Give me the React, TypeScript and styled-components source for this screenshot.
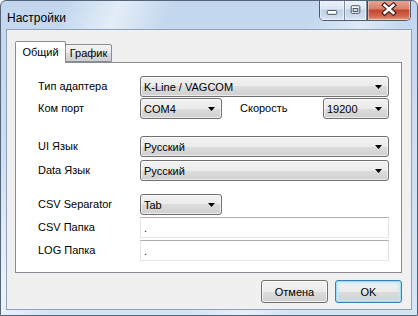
import styled, { createGlobalStyle } from 'styled-components';

const GlobalStyle = createGlobalStyle`
  html, body {
    margin: 0;
    padding: 0;
  }
  body {
    width: 418px;
    height: 316px;
    overflow: hidden;
    background: #fff;
    font-family: "Liberation Sans", Arial, sans-serif;
  }
`;

const Window = styled.div`
  width: 418px;
  height: 316px;
  box-sizing: border-box;
  border: 1px solid #56657a;
  border-radius: 6px 6px 0 0;
  overflow: hidden;
  display: flex;
  flex-direction: column;
  background:
    linear-gradient(112deg, rgba(255, 255, 255, 0) 12%, rgba(255, 255, 255, 0.55) 22%, rgba(255, 255, 255, 0) 32%),
    linear-gradient(112deg, rgba(255, 255, 255, 0) 58%, rgba(255, 255, 255, 0.45) 68%, rgba(255, 255, 255, 0) 76%),
    linear-gradient(to bottom, #c2d7ee 0%, #cddff2 50%, #d5e5f5 100%);
`;

const TitleBar = styled.div`
  height: 28px;
  display: flex;
  align-items: flex-start;
  flex-shrink: 0;
`;

const Title = styled.div`
  flex: 1;
  padding: 10px 0 0 6px;
  font-size: 12px;
  color: #000;
`;

const CaptionGroup = styled.div`
  display: flex;
  margin: -1px 6px 0 0;
  height: 20px;
  border: 1px solid #4a5b70;
  border-top: none;
  border-radius: 0 0 5px 5px;
  overflow: hidden;
`;

const CaptionButton = styled.div<{ $w: number; $close?: boolean }>`
  width: ${(p) => p.$w}px;
  height: 20px;
  display: flex;
  align-items: center;
  justify-content: center;
  box-sizing: border-box;
  border-left: ${(p) => (p.$close ? '1px solid #6b3a34' : 'none')};
  border-right: ${(p) => (p.$close ? 'none' : '1px solid #7d8da1')};
  box-shadow: inset 0 0 0 1px rgba(255, 255, 255, 0.45);
  background: ${(p) =>
    p.$close
      ? 'linear-gradient(to bottom, #e9a898 0%, #d9806c 45%, #c4452e 50%, #d2664c 80%, #e09b80 100%)'
      : 'linear-gradient(to bottom, #eef3f9 0%, #dbe5f1 45%, #c3d3e7 50%, #cddbec 80%, #dce7f3 100%)'};
`;

const Client = styled.div`
  margin: 0 5px 0 5px;
  height: 281px;
  box-sizing: border-box;
  border: 1px solid #8fa2b8;
  background: #f0f0f0;
  padding: 11px 9px 0 8px;
  display: flex;
  flex-direction: column;
`;

const TabStrip = styled.div`
  display: flex;
  align-items: flex-end;
  height: 21px;
  position: relative;
  z-index: 1;
`;

const Tab = styled.div<{ $active?: boolean; $w: number }>`
  width: ${(p) => p.$w}px;
  height: ${(p) => (p.$active ? 22 : 18)}px;
  margin-bottom: ${(p) => (p.$active ? -1 : 0)}px;
  margin-left: ${(p) => (p.$active ? 0 : -1)}px;
  box-sizing: border-box;
  border: 1px solid #898c95;
  border-bottom: ${(p) => (p.$active ? 'none' : '1px solid #898c95')};
  border-radius: 2px 2px 0 0;
  background: ${(p) => (p.$active ? '#fff' : 'linear-gradient(to bottom, #f2f2f2 0%, #ebebeb 50%, #dddddd 50%, #cfcfcf 100%)')};
  display: flex;
  align-items: center;
  justify-content: center;
  padding-bottom: ${(p) => (p.$active ? 1 : 0)}px;
  font-size: 11px;
  color: #000;
`;

const Panel = styled.div`
  width: 387px;
  height: 211px;
  box-sizing: border-box;
  border: 1px solid #898c95;
  background: #fff;
  padding: 13px 12px 0 22px;
`;

const Row = styled.div<{ $gap: number }>`
  display: grid;
  grid-template-columns: 102px 1fr;
  align-items: center;
  height: 21px;
  margin-top: ${(p) => p.$gap}px;
`;

const Label = styled.div`
  font-size: 11px;
  color: #000;
  white-space: nowrap;
  margin-top: -1px;
`;

const Inline = styled.div`
  display: flex;
  align-items: center;
`;

const SideLabel = styled(Label)`
  margin-left: 18px;
`;

const Combo = styled.div<{ $w?: number; $push?: boolean }>`
  width: ${(p) => (p.$w ? `${p.$w}px` : '100%')};
  margin-left: ${(p) => (p.$push ? 'auto' : '0')};
  height: 21px;
  box-sizing: border-box;
  border: 1px solid #707070;
  border-radius: 3px;
  background: linear-gradient(to bottom, #f2f2f2 0%, #ebebeb 50%, #dddddd 50%, #cfcfcf 100%);
  box-shadow: inset 0 0 0 1px rgba(255, 255, 255, 0.6);
  display: flex;
  align-items: center;
  padding: 0 6px 0 3px;
  font-size: 11px;
  color: #000;
`;

const ComboText = styled.span`
  flex: 1;
  white-space: nowrap;
`;

const TextBox = styled.div`
  height: 21px;
  box-sizing: border-box;
  border: 1px solid;
  border-color: #abadb3 #dbdfe6 #e3e9ef #e2e3ea;
  background: #fff;
  display: flex;
  align-items: center;
  padding-left: 3px;
  font-size: 11px;
  color: #000;
`;

const Footer = styled.div`
  display: flex;
  justify-content: flex-end;
  gap: 7px;
  margin-top: 7px;
  width: 387px;
`;

const Button = styled.div<{ $default?: boolean }>`
  width: 67px;
  height: 23px;
  box-sizing: border-box;
  border: 1px solid ${(p) => (p.$default ? '#3c7fb1' : '#707070')};
  border-radius: 3px;
  background: linear-gradient(to bottom, #f2f2f2 0%, #ebebeb 50%, #dddddd 50%, #cfcfcf 100%);
  box-shadow: ${(p) =>
    p.$default
      ? 'inset 0 0 0 1px #9fdcf8, inset 0 0 3px 2px #c4e8f8'
      : 'inset 0 0 0 1px rgba(255, 255, 255, 0.7)'};
  display: flex;
  align-items: center;
  justify-content: center;
  font-size: 11px;
  color: #000;
`;

const Arrow = () => (
  <svg width="7" height="4" viewBox="0 0 7 4">
    <path d="M0 0 H7 L3.5 4 Z" fill="#000" />
  </svg>
);

function Select({ value, w, push }: { value: string; w?: number; push?: boolean }) {
  return (
    <Combo $w={w} $push={push}>
      <ComboText>{value}</ComboText>
      <Arrow />
    </Combo>
  );
}

export default function App() {
  return (
    <>
      <GlobalStyle />
      <Window>
        <TitleBar>
          <Title>Настройки</Title>
          <CaptionGroup>
            <CaptionButton $w={25}>
              <svg width="25" height="20" viewBox="0 0 25 20">
                <rect x="7.5" y="10.5" width="10" height="4" rx="1" fill="#fff" stroke="#3b4a5c" />
              </svg>
            </CaptionButton>
            <CaptionButton $w={22}>
              <svg width="22" height="20" viewBox="0 0 22 20">
                <rect x="6.5" y="5.5" width="9" height="8" rx="1" fill="#fff" stroke="#3b4a5c" />
                <rect x="8.5" y="8.5" width="5" height="3" fill="#d6e2ef" stroke="#3b4a5c" />
              </svg>
            </CaptionButton>
            <CaptionButton $w={43} $close>
              <svg width="43" height="20" viewBox="0 0 43 20">
                <path d="M17 5 L26 13 M26 5 L17 13" stroke="#4a1f1a" strokeWidth="5" strokeLinecap="square" />
                <path d="M17 5 L26 13 M26 5 L17 13" stroke="#fff" strokeWidth="2.6" strokeLinecap="square" />
              </svg>
            </CaptionButton>
          </CaptionGroup>
        </TitleBar>
        <Client>
          <TabStrip>
            <Tab $active $w={51}>Общий</Tab>
            <Tab $w={47}>График</Tab>
          </TabStrip>
          <Panel>
            <Row $gap={0}>
              <Label>Тип адаптера</Label>
              <Select value="K-Line / VAGCOM" />
            </Row>
            <Row $gap={1}>
              <Label>Ком порт</Label>
              <Inline>
                <Select value="COM4" w={82} />
                <SideLabel>Скорость</SideLabel>
                <Select value="19200" w={66} push />
              </Inline>
            </Row>
            <Row $gap={17}>
              <Label>UI Язык</Label>
              <Select value="Русский" />
            </Row>
            <Row $gap={3}>
              <Label>Data Язык</Label>
              <Select value="Русский" />
            </Row>
            <Row $gap={13}>
              <Label>CSV Separator</Label>
              <Select value="Tab" w={82} />
            </Row>
            <Row $gap={2}>
              <Label>CSV Папка</Label>
              <TextBox>.</TextBox>
            </Row>
            <Row $gap={2}>
              <Label>LOG Папка</Label>
              <TextBox>.</TextBox>
            </Row>
          </Panel>
          <Footer>
            <Button>Отмена</Button>
            <Button $default>OK</Button>
          </Footer>
        </Client>
      </Window>
    </>
  );
}
